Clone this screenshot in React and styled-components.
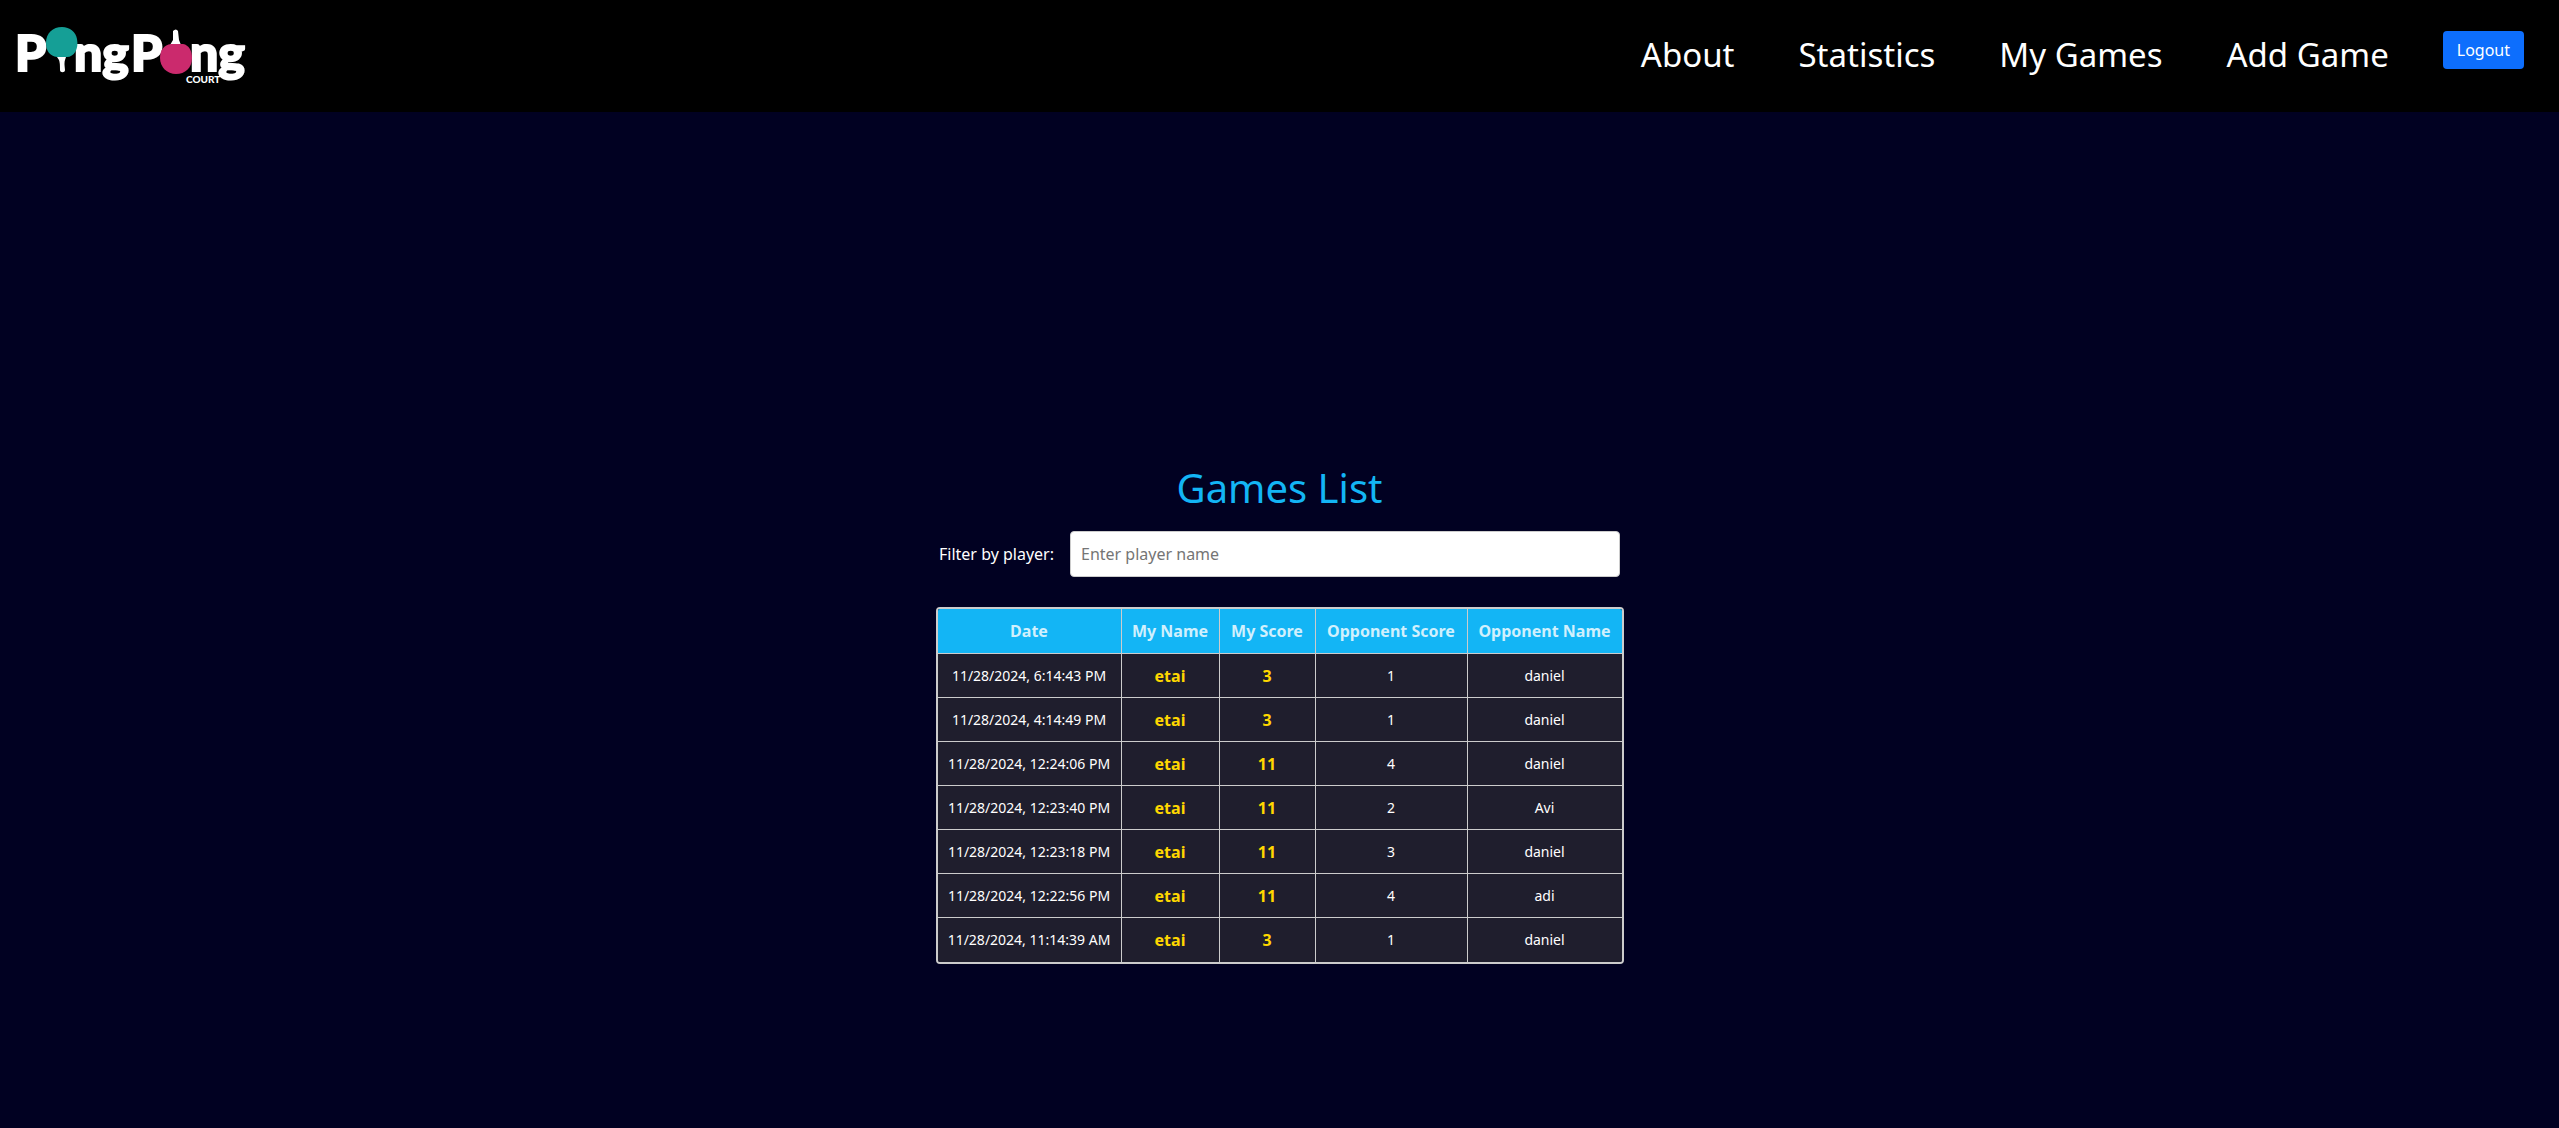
import React, { useState } from "react";
import styled, { createGlobalStyle } from "styled-components";

const GlobalStyle = createGlobalStyle`
  * { box-sizing: border-box; }
  body {
    margin: 0;
    background: #010122;
    color: #fff;
    font-family: "Noto Sans", "Open Sans", sans-serif;
    font-size: 16px;
    line-height: 24px;
  }
`;

const Page = styled.div`
  min-height: 100vh;
`;

const Navbar = styled.header`
  display: flex;
  align-items: flex-start;
  justify-content: space-between;
  height: 112px;
  padding: 16px 35px 0 12px;
  background: #000;
`;

const Brand = styled.a`
  display: block;
`;

const Nav = styled.nav`
  display: flex;
  align-items: flex-start;
  padding-top: 15px;
`;

const NavLinks = styled.ul`
  display: flex;
  gap: 64px;
  margin: 0 54px 0 0;
  padding: 0;
  list-style: none;
`;

const NavLink = styled.a`
  color: #fff;
  font-size: 33px;
  line-height: 48px;
  text-decoration: none;
`;

const LogoutButton = styled.button`
  height: 38px;
  padding: 0 14px;
  border: 0;
  border-radius: 4px;
  background: #0d6efd;
  color: #fff;
  font: inherit;
`;

const Main = styled.main`
  display: flex;
  flex-direction: column;
  align-items: center;
  padding: 352px 16px 0;
`;

const Title = styled.h1`
  margin: 0 0 19px;
  color: #13b5f5;
  font-size: 40px;
  font-weight: 400;
  line-height: 48px;
`;

const Filter = styled.form`
  display: flex;
  align-items: center;
  gap: 16px;
  margin-bottom: 30px;
`;

const FilterInput = styled.input`
  width: 550px;
  height: 46px;
  padding: 0 10px;
  border: 1px solid #ccc;
  border-radius: 4px;
  background: #fff;
  color: #212529;
  font: inherit;
  &::placeholder { color: #757575; opacity: 1; }
`;

const TableFrame = styled.div`
  border: 2px solid #ccc;
  border-radius: 4px;
  overflow: hidden;
`;

const Table = styled.table`
  border-collapse: separate;
  border-spacing: 0;
  table-layout: fixed;
  width: 684px;
  background: #1f1e2d;
  text-align: center;
`;

const Col = styled.col`
  width: ${(p) => p.$width}px;
`;

const HeadCell = styled.th`
  height: 45px;
  padding: 0;
  border-bottom: 1px solid #ccc;
  background: #13b5f5;
  color: #d0f0fd;
  font-weight: 700;
  &:not(:last-child) { border-right: 1px solid #ccc; }
`;

const Cell = styled.td`
  height: 44px;
  padding: 0;
  color: ${(p) => (p.$mine ? "#ffd700" : "#fff")};
  font-size: ${(p) => (p.$mine ? 16 : 14)}px;
  font-weight: ${(p) => (p.$mine ? 700 : 400)};
  &:not(:last-child) { border-right: 1px solid #ccc; }
  tr:not(:last-child) > & { border-bottom: 1px solid #ccc; }
`;

const LogoText = styled.text`
  fill: #fff;
  stroke: #fff;
  stroke-width: ${(p) => (p.$size > 20 ? 2 : 0)}px;
  font-family: Lato, "Open Sans", sans-serif;
  font-size: ${(p) => p.$size}px;
  font-weight: 900;
`;

function Logo() {
  return (
    <svg width="240" height="72" viewBox="0 0 240 72" role="img" aria-label="PingPong Court">
      <LogoText $size={50} x="3" y="55">P</LogoText>
      <LogoText $size={50} x="62" y="55">ng</LogoText>
      <LogoText $size={50} x="119" y="55">P</LogoText>
      <LogoText $size={50} x="178" y="55">ng</LogoText>
      <path d="M45 41h9l-1 3q-1 2 0 10c0 3-5 3-5 0q0-8-1-10z" fill="#fff" />
      <path d="M50 11c8 0 14 5 15 12 2 10-3 18-10 18H45c-7-1-11-6-11-14 0-10 7-16 16-16z" fill="#159f96" />
      <path d="M161 15q3-3 5 0l1 9 2 5h-11l3-5z" fill="#fff" />
      <path d="M159 28h12c6 1 9 7 9 14 0 10-7 16-16 16s-16-7-16-16c0-8 4-13 11-14z" fill="#cb2a6d" />
      <LogoText $size={10} x="174" y="67">COURT</LogoText>
    </svg>
  );
}

const links = ["About", "Statistics", "My Games", "Add Game"];
const columns = [
  ["Date", 184],
  ["My Name", 98],
  ["My Score", 96],
  ["Opponent Score", 152],
  ["Opponent Name", 154],
];
const games = [
  ["11/28/2024, 6:14:43 PM", "etai", 3, 1, "daniel"],
  ["11/28/2024, 4:14:49 PM", "etai", 3, 1, "daniel"],
  ["11/28/2024, 12:24:06 PM", "etai", 11, 4, "daniel"],
  ["11/28/2024, 12:23:40 PM", "etai", 11, 2, "Avi"],
  ["11/28/2024, 12:23:18 PM", "etai", 11, 3, "daniel"],
  ["11/28/2024, 12:22:56 PM", "etai", 11, 4, "adi"],
  ["11/28/2024, 11:14:39 AM", "etai", 3, 1, "daniel"],
];

export default function App() {
  const [player, setPlayer] = useState("");
  const shown = games.filter((g) => g[4].toLowerCase().includes(player.toLowerCase()));
  return (
    <Page>
      <GlobalStyle />
      <Navbar>
        <Brand href="#home"><Logo /></Brand>
        <Nav>
          <NavLinks>
            {links.map((l) => (
              <li key={l}><NavLink href={"#" + l.replace(" ", "-").toLowerCase()}>{l}</NavLink></li>
            ))}
          </NavLinks>
          <LogoutButton type="button">Logout</LogoutButton>
        </Nav>
      </Navbar>
      <Main>
        <Title>Games List</Title>
        <Filter onSubmit={(e) => e.preventDefault()}>
          <label htmlFor="player">Filter by player:</label>
          <FilterInput
            id="player"
            type="text"
            placeholder="Enter player name"
            value={player}
            onChange={(e) => setPlayer(e.target.value)}
          />
        </Filter>
        <TableFrame>
          <Table>
            <colgroup>
              {columns.map(([name, width]) => <Col key={name} $width={width} />)}
            </colgroup>
            <thead>
              <tr>{columns.map(([name]) => <HeadCell key={name} scope="col">{name}</HeadCell>)}</tr>
            </thead>
            <tbody>
              {shown.map((g) => (
                <tr key={g[0]}>
                  {g.map((v, i) => <Cell key={i} $mine={i === 1 || i === 2}>{v}</Cell>)}
                </tr>
              ))}
            </tbody>
          </Table>
        </TableFrame>
      </Main>
    </Page>
  );
}
